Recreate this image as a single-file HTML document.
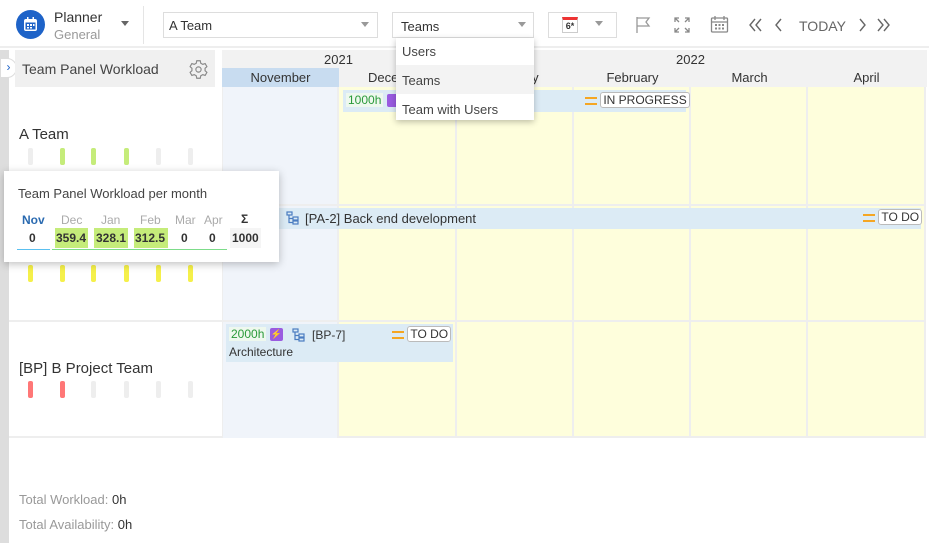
<!DOCTYPE html>
<html><head><meta charset="utf-8"><style>
*{box-sizing:border-box;margin:0;padding:0}
body{width:929px;height:543px;overflow:hidden;background:#fff;font-family:"Liberation Sans",sans-serif;color:#333;position:relative;font-size:13px}
.a{position:absolute}
.bar{position:absolute;width:5px;height:17px;border-radius:2px}
.cell{position:absolute;border-right:2px solid #eee;border-bottom:2px solid #eee}
.task{position:absolute;background:#dcebf5;font-size:12px}
.tag{border:1px solid #bbb;border-radius:3px;background:#fff;padding:0 2px;font-size:12px;color:#333}
.eq{display:inline-block;width:12px;height:8px;border-top:2px solid #f5a623;border-bottom:2px solid #f5a623;vertical-align:middle}
</style></head><body>
<!-- toolbar -->
<div class="a" style="left:0;top:0;width:929px;height:48px;border-bottom:2px solid #eee"></div>
<div class="a" style="left:16px;top:10px;width:29px;height:29px;border-radius:50%;background:#1e63c8"></div>
<svg class="a" style="left:22px;top:16px" width="17" height="17" viewBox="0 0 17 17"><rect x="2" y="3" width="13" height="12" rx="2" fill="#fff"/><rect x="3.5" y="6.5" width="10" height="7" fill="#1e63c8"/><g fill="#fff"><rect x="5" y="8" width="2" height="2"/><rect x="8" y="8" width="2" height="2"/><rect x="11" y="8" width="1.5" height="2"/><rect x="5" y="11" width="2" height="1.5"/><rect x="8" y="11" width="2" height="1.5"/></g><rect x="5" y="1" width="1.5" height="3" fill="#fff"/><rect x="10.5" y="1" width="1.5" height="3" fill="#fff"/></svg>
<div class="a" style="left:54px;top:9px;font-size:14px;color:#333">Planner</div>
<div class="a" style="left:54px;top:27px;font-size:13px;color:#999">General</div>
<div class="a" style="left:121px;top:21px;border:4px solid transparent;border-top:5px solid #666"></div>
<div class="a" style="left:143px;top:6px;width:1px;height:38px;background:#e5e5e5"></div>
<div class="a" style="left:163px;top:12px;width:215px;height:26px;border:1px solid #ddd"></div>
<div class="a" style="left:169px;top:18px;font-size:13px">A Team</div>
<div class="a" style="left:361px;top:22px;border:4px solid transparent;border-top:5px solid #999"></div>
<div class="a" style="left:392px;top:12px;width:142px;height:26px;border:1px solid #ddd"></div>
<div class="a" style="left:401px;top:19px;font-size:13px">Teams</div>
<div class="a" style="left:518px;top:22px;border:4px solid transparent;border-top:5px solid #999"></div>
<div class="a" style="left:548px;top:12px;width:69px;height:26px;border:1px solid #ddd"></div>
<div class="a" style="left:562px;top:17px;width:16px;height:16px;border:1px solid #ccc;border-top:3px solid #e33;font-size:9px;font-weight:bold;text-align:center;line-height:12px">6*</div>
<div class="a" style="left:595px;top:21px;border:4px solid transparent;border-top:5px solid #999"></div>
<svg class="a" style="left:634px;top:15px" width="20" height="20" viewBox="0 0 20 20" fill="none" stroke="#999" stroke-width="1.3"><path d="M3 2v16M3 3h12l-3 4 3 4H3"/></svg>
<svg class="a" style="left:673px;top:16px" width="18" height="18" viewBox="0 0 18 18" fill="none" stroke="#888" stroke-width="1.3"><path d="M2 6V2h4M12 2h4v4M16 12v4h-4M6 16H2v-4M2 2l4 4M16 2l-4 4M16 16l-4-4M2 16l4-4"/></svg>
<svg class="a" style="left:710px;top:15px" width="19" height="19" viewBox="0 0 19 19" fill="none" stroke="#888" stroke-width="1.3"><rect x="1.5" y="3" width="16" height="14" rx="1"/><path d="M1.5 7h16M5 1v4M14 1v4"/><g fill="#888" stroke="none"><rect x="5" y="9" width="2" height="2"/><rect x="8.5" y="9" width="2" height="2"/><rect x="12" y="9" width="2" height="2"/><rect x="5" y="12.5" width="2" height="2"/><rect x="8.5" y="12.5" width="2" height="2"/><rect x="12" y="12.5" width="2" height="2"/></g></svg>
<svg class="a" style="left:747px;top:17px" width="48" height="16" viewBox="0 0 48 16" fill="none" stroke="#666" stroke-width="1.4"><path d="M8 2L3 8l5 6M14 2L9 8l5 6M34 2l-5 6 5 6"/></svg>
<div class="a" style="left:799px;top:18px;font-size:14px;color:#666">TODAY</div>
<svg class="a" style="left:857px;top:17px" width="40" height="16" viewBox="0 0 40 16" fill="none" stroke="#666" stroke-width="1.4"><path d="M3 2l5 6-5 6M21 2l5 6-5 6M27 2l5 6-5 6"/></svg>

<!-- left panel -->
<div class="a" style="left:0;top:50px;width:9px;height:493px;background:#ddd"></div>
<div class="a" style="left:0;top:58px;width:17px;height:20px;border-radius:0 10px 10px 0;background:#fff;border:1px solid #ddd;color:#1e63c8;font-size:12px;line-height:17px;text-align:center">›</div>
<div class="a" style="left:15px;top:50px;width:200px;height:37px;background:#f0f0f0"></div>
<div class="a" style="left:22px;top:61px;font-size:14px;color:#444">Team Panel Workload</div>
<svg class="a" style="left:188px;top:59px" width="21" height="21" viewBox="0 0 24 24" fill="none" stroke="#888" stroke-width="1.3"><circle cx="12" cy="12" r="3"/><path d="M10 2h4l.6 2.8 2.3 1.3 2.7-.9 2 3.5-2.1 1.9v2.8l2.1 1.9-2 3.5-2.7-.9-2.3 1.3L14 22h-4l-.6-2.8-2.3-1.3-2.7.9-2-3.5 2.1-1.9v-2.8L2.4 8.7l2-3.5 2.7.9 2.3-1.3z"/></svg>
<div class="a" style="left:9px;top:204px;width:213px;height:2px;background:#eee"></div>
<div class="a" style="left:9px;top:320px;width:213px;height:2px;background:#eee"></div>
<div class="a" style="left:9px;top:436px;width:917px;height:2px;background:#eee"></div>
<div class="a" style="left:19px;top:126px;font-size:15px;color:#333">A Team</div>
<div class="a" style="left:19px;top:360px;font-size:15px;color:#333">[BP] B Project Team</div>
<!-- bars -->
<div class="bar" style="left:28px;top:148px;background:#eee"></div><div class="bar" style="left:60px;top:148px;background:#c5ec7a"></div><div class="bar" style="left:91px;top:148px;background:#c5ec7a"></div><div class="bar" style="left:124px;top:148px;background:#c5ec7a"></div><div class="bar" style="left:156px;top:148px;background:#eee"></div><div class="bar" style="left:188px;top:148px;background:#eee"></div>
<div class="bar" style="left:28px;top:265px;background:#f5f04a"></div><div class="bar" style="left:60px;top:265px;background:#f5f04a"></div><div class="bar" style="left:91px;top:265px;background:#f5f04a"></div><div class="bar" style="left:124px;top:265px;background:#f5f04a"></div><div class="bar" style="left:156px;top:265px;background:#f5f04a"></div><div class="bar" style="left:188px;top:265px;background:#f5f04a"></div>
<div class="bar" style="left:28px;top:381px;background:#f77"></div><div class="bar" style="left:60px;top:381px;background:#f77"></div><div class="bar" style="left:91px;top:381px;background:#eee"></div><div class="bar" style="left:124px;top:381px;background:#eee"></div><div class="bar" style="left:156px;top:381px;background:#eee"></div><div class="bar" style="left:188px;top:381px;background:#eee"></div>
<div class="a" style="left:19px;top:492px;font-size:13px;color:#999">Total Workload: <span style="color:#333">0h</span></div>
<div class="a" style="left:19px;top:517px;font-size:13px;color:#999">Total Availability: <span style="color:#333">0h</span></div>

<!-- grid header -->
<div class="a" style="left:222px;top:50px;width:705px;height:37px;background:#f2f2f2"></div>
<div class="a" style="left:222px;top:68px;width:117px;height:19px;background:#c8dcf0"></div>
<div class="a" style="left:324px;top:52px;font-size:13px">2021</div>
<div class="a" style="left:676px;top:52px;font-size:13px">2022</div>
<div class="a" style="left:222px;top:70px;width:117px;text-align:center;font-size:13px">November</div>
<div class="a" style="left:339px;top:70px;width:118px;text-align:center;font-size:13px">December</div>
<div class="a" style="left:457px;top:70px;width:117px;text-align:center;font-size:13px">January</div>
<div class="a" style="left:574px;top:70px;width:117px;text-align:center;font-size:13px">February</div>
<div class="a" style="left:691px;top:70px;width:117px;text-align:center;font-size:13px">March</div>
<div class="a" style="left:808px;top:70px;width:117px;text-align:center;font-size:13px">April</div>
<!-- cells -->
<div class="a" style="left:222px;top:87px;width:1px;height:351px;background:#eee"></div>
<div class="cell" style="left:223px;top:87px;width:116px;height:351px;background:#f0f4fa;border-bottom:none"></div>
<div class="a" style="left:223px;top:204px;width:116px;height:2px;background:#eee"></div>
<div class="a" style="left:223px;top:320px;width:116px;height:2px;background:#eee"></div>
<div class="cell" style="left:339px;top:87px;width:118px;height:119px;background:#fefedc"></div>
<div class="cell" style="left:457px;top:87px;width:117px;height:119px;background:#fefedc"></div>
<div class="cell" style="left:574px;top:87px;width:117px;height:119px;background:#fefedc"></div>
<div class="cell" style="left:691px;top:87px;width:117px;height:119px;background:#fefedc"></div>
<div class="cell" style="left:808px;top:87px;width:118px;height:119px;background:#fefedc"></div>
<div class="cell" style="left:339px;top:206px;width:118px;height:116px;background:#fefedc"></div>
<div class="cell" style="left:457px;top:206px;width:117px;height:116px;background:#fefedc"></div>
<div class="cell" style="left:574px;top:206px;width:117px;height:116px;background:#fefedc"></div>
<div class="cell" style="left:691px;top:206px;width:117px;height:116px;background:#fefedc"></div>
<div class="cell" style="left:808px;top:206px;width:118px;height:116px;background:#fefedc"></div>
<div class="cell" style="left:339px;top:322px;width:118px;height:116px;background:#fefedc"></div>
<div class="cell" style="left:457px;top:322px;width:117px;height:116px;background:#fefedc"></div>
<div class="cell" style="left:574px;top:322px;width:117px;height:116px;background:#fefedc"></div>
<div class="cell" style="left:691px;top:322px;width:117px;height:116px;background:#fefedc"></div>
<div class="cell" style="left:808px;top:322px;width:118px;height:116px;background:#fefedc"></div>

<!-- tasks -->
<div class="task" style="left:343px;top:90px;width:343px;height:22px"></div>
<div class="a" style="left:346px;top:93px;background:#eef8ee;color:#2a9a3a;font-size:12px;padding:0 2px">1000h</div>
<div class="a" style="left:387px;top:94px;width:12px;height:13px;background:#9a5be0;border-radius:2px"></div>
<div class="a" style="left:585px;top:93px;font-size:12px"><span class="eq"></span> <span class="tag">IN PROGRESS</span></div>
<div class="task" style="left:278px;top:208px;width:643px;height:21px"></div>
<svg class="a" style="left:286px;top:211px" width="14" height="14" viewBox="0 0 14 14" fill="none" stroke="#4a7cc0" stroke-width="1.2"><rect x="1" y="1" width="5" height="3"/><rect x="7" y="6" width="5" height="3"/><rect x="7" y="10" width="5" height="3"/><path d="M3 4v7.5h4M3 7.5h4"/></svg>
<div class="a" style="left:305px;top:211px;font-size:13px">[PA-2] Back end development</div>
<div class="a" style="left:863px;top:210px;font-size:12px"><span class="eq"></span> <span class="tag">TO DO</span></div>
<div class="task" style="left:226px;top:324px;width:227px;height:38px"></div>
<div class="a" style="left:229px;top:327px;background:#eef8ee;color:#2a9a3a;font-size:12px;padding:0 2px">2000h</div>
<div class="a" style="left:270px;top:328px;width:13px;height:13px;background:#9a5be0;border-radius:2px;color:#fff;font-size:9px;text-align:center;line-height:13px">⚡</div>
<svg class="a" style="left:292px;top:328px" width="14" height="14" viewBox="0 0 14 14" fill="none" stroke="#4a7cc0" stroke-width="1.2"><rect x="1" y="1" width="5" height="3"/><rect x="7" y="6" width="5" height="3"/><rect x="7" y="10" width="5" height="3"/><path d="M3 4v7.5h4M3 7.5h4"/></svg>
<div class="a" style="left:312px;top:328px;font-size:12px">[BP-7]</div>
<div class="a" style="left:392px;top:327px;font-size:12px"><span class="eq"></span> <span class="tag">TO DO</span></div>
<div class="a" style="left:229px;top:345px;font-size:12px">Architecture</div>

<!-- dropdown -->
<div class="a" style="left:396px;top:38px;width:138px;height:82px;background:#fff;box-shadow:0 2px 6px rgba(0,0,0,.25)"></div>
<div class="a" style="left:396px;top:65px;width:138px;height:29px;background:#f3f3f3"></div>
<div class="a" style="left:402px;top:44px;font-size:13px;color:#444">Users</div>
<div class="a" style="left:402px;top:73px;font-size:13px;color:#444">Teams</div>
<div class="a" style="left:402px;top:102px;font-size:13px;color:#444">Team with Users</div>

<!-- popup -->
<div class="a" style="left:4px;top:171px;width:275px;height:91px;background:#fff;box-shadow:0 2px 8px rgba(0,0,0,.25)"></div>
<div class="a" style="left:18px;top:186px;font-size:13px;color:#444">Team Panel Workload per month</div>
<div class="a" style="left:22px;top:213px;font-size:12px;font-weight:bold;color:#2a6ab0">Nov</div>
<div class="a" style="left:61px;top:213px;font-size:12px;color:#aaa">Dec</div>
<div class="a" style="left:101px;top:213px;font-size:12px;color:#aaa">Jan</div>
<div class="a" style="left:140px;top:213px;font-size:12px;color:#aaa">Feb</div>
<div class="a" style="left:175px;top:213px;font-size:12px;color:#aaa">Mar</div>
<div class="a" style="left:204px;top:213px;font-size:12px;color:#aaa">Apr</div>
<div class="a" style="left:241px;top:212px;font-size:12px;font-weight:bold">Σ</div>
<div class="a" style="left:55px;top:228px;width:33px;height:20px;background:#c5ec7a"></div>
<div class="a" style="left:94px;top:228px;width:34px;height:20px;background:#c5ec7a"></div>
<div class="a" style="left:134px;top:228px;width:34px;height:20px;background:#c5ec7a"></div>
<div class="a" style="left:230px;top:228px;width:31px;height:20px;background:#f5f5f5"></div>
<div class="a" style="left:29px;top:231px;font-size:12px;font-weight:bold">0</div>
<div class="a" style="left:56px;top:231px;font-size:12px;font-weight:bold">359.4</div>
<div class="a" style="left:96px;top:231px;font-size:12px;font-weight:bold">328.1</div>
<div class="a" style="left:135px;top:231px;font-size:12px;font-weight:bold">312.5</div>
<div class="a" style="left:181px;top:231px;font-size:12px;font-weight:bold">0</div>
<div class="a" style="left:209px;top:231px;font-size:12px;font-weight:bold">0</div>
<div class="a" style="left:232px;top:231px;font-size:12px;font-weight:bold">1000</div>
<div class="a" style="left:17px;top:249px;width:33px;height:1px;background:#5bc0f0"></div>
<div class="a" style="left:52px;top:249px;width:175px;height:1px;background:#7ddc8a"></div>
</body></html>
